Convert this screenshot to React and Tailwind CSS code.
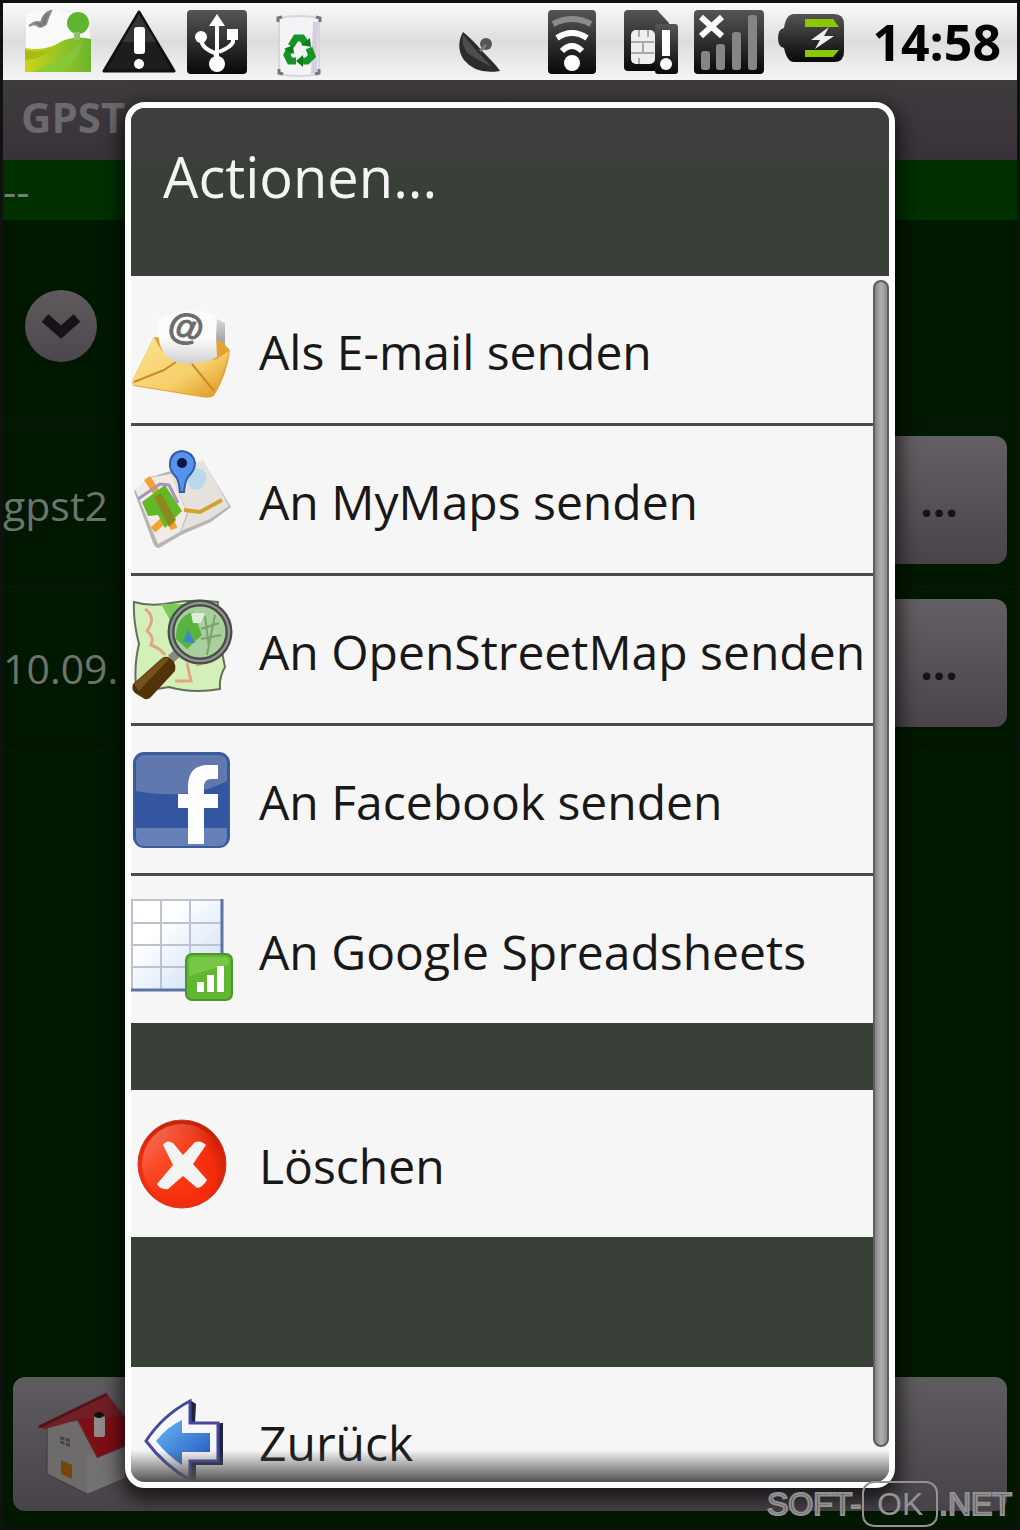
import React from "react";

function Landscape() {
  return (
    <svg viewBox="0 0 68 64" className="h-16 w-[68px]" aria-hidden="true">
      <defs>
        <linearGradient id="hill" x1="0" x2="1">
          <stop offset="0" stopColor="#c9d41f" />
          <stop offset="1" stopColor="#6bb52c" />
        </linearGradient>
      </defs>
      <path d="M2 4Q20 -2 44 3L58 2Q68 16 66 40L2 44Z" fill="#fafafa" />
      <path d="M1 38Q22 42 38 31Q52 25 67 29V62H1Z" fill="url(#hill)" />
      <path d="M1 40Q18 44 30 38Q16 50 1 50Z" fill="#a5bd12" />
      <path d="M8 62Q40 50 58 32Q54 52 34 62Z" fill="#83c93c" opacity=".8" />
      <ellipse cx="54" cy="13" rx="11" ry="11" fill="#5eb52f" />
      <path d="M53 22V30" stroke="#8cc470" strokeWidth="6" />
      <path d="M5 16Q12 10 17 13Q19 3 27 1Q24 7 22 14Q16 19 13 15Q9 13 5 16Z" fill="#777" stroke="#888" strokeWidth="2" />
    </svg>
  );
}

function Warning() {
  return (
    <svg viewBox="0 0 74 64" className="h-16 w-[74px]" aria-hidden="true">
      <path d="M37 2L72 61H2Z" fill="#1d1d1d" stroke="#111" strokeWidth="3" strokeLinejoin="round" />
      <path d="M37 4L54 32H20Z" fill="#444" opacity=".6" />
      <rect x="32" y="17" width="11" height="27" rx="3" fill="#fff" />
      <circle cx="37" cy="54" r="5" fill="#fff" />
    </svg>
  );
}

function DarkGradient({ id }) {
  return (
    <linearGradient id={id} x1="0" x2="0" y1="0" y2="1">
      <stop offset="0" stopColor="#555" />
      <stop offset="1" stopColor="#080808" />
    </linearGradient>
  );
}

function Usb() {
  return (
    <svg viewBox="0 0 62 66" className="h-[66px] w-[62px]" aria-hidden="true">
      <defs><DarkGradient id="usbg" /></defs>
      <rect x="1" y="1" width="60" height="64" rx="4" fill="url(#usbg)" />
      <g fill="none" stroke="#fff" strokeWidth="4">
        <path d="M31 56V12" />
        <path d="M16 28V34Q18 40 29 44L31 50" />
        <path d="M47 24V33Q45 38 33 43" />
      </g>
      <path d="M31 5L39 17H23Z" fill="#fff" />
      <circle cx="15" cy="28" r="6" fill="#fff" />
      <rect x="41" y="20" width="11" height="11" fill="#fff" />
      <circle cx="31" cy="55" r="8" fill="#fff" />
    </svg>
  );
}

function Recycle() {
  return (
    <svg viewBox="0 0 46 64" className="h-16 w-[46px]" aria-hidden="true">
      <path d="M3 4Q23 0 43 4V60Q23 64 3 60Z" fill="#f4f4f6" stroke="#d8d5de" strokeWidth="2" />
      <path d="M37 8L42 8L41 58L35 60Z" fill="#d4cfe0" />
      <g fill="none" stroke="#777" strokeWidth="3">
        <path d="M2 8V4L6 3M44 8V4L40 3M3 55V59L7 60M43 55V59L39 60" />
      </g>
      <g fill="none" stroke="#169426" strokeWidth="7">
        <path d="M15 32L20 24H26L30 30" />
        <path d="M33 34L36 42L31 47H26" />
        <path d="M20 47H14L11 41L14 35" />
      </g>
      <path d="M25 31L35 33L34 24ZM27 41V53L20 47ZM8 35L17 31L18 40Z" fill="#0c7e1c" />
    </svg>
  );
}

function Dish() {
  return (
    <svg viewBox="0 0 44 42" className="h-[42px] w-11" aria-hidden="true">
      <path d="M5 1Q-3 16 6 29Q18 44 42 40Q40 36 26 22Q14 8 5 1Z" fill="#2b2b2b" />
      <path d="M5 4Q3 18 12 24Q22 30 34 36Q18 20 5 4Z" fill="#666" opacity=".6" />
      <circle cx="28" cy="13" r="6" fill="#555" />
      <path d="M22 20L28 14" stroke="#777" strokeWidth="3" />
    </svg>
  );
}

function Wifi() {
  return (
    <svg viewBox="0 0 50 66" className="h-[66px] w-[50px]" aria-hidden="true">
      <defs><DarkGradient id="wifig" /></defs>
      <rect x="1" y="1" width="48" height="64" rx="4" fill="url(#wifig)" />
      <g fill="none" strokeWidth="6">
        <path d="M6 15Q25 5 44 15" stroke="#8a8a8a" />
        <path d="M10 29Q25 19 40 29" stroke="#fff" />
        <path d="M15 42Q25 32 35 42" stroke="#fff" />
      </g>
      <circle cx="25" cy="54" r="8" fill="#fff" />
    </svg>
  );
}

function Sim() {
  return (
    <svg viewBox="0 0 56 66" className="h-[66px] w-14" aria-hidden="true">
      <defs><DarkGradient id="simg" /></defs>
      <path d="M5 1H34L46 14V62H5Q1 62 1 58V5Q1 1 5 1Z" fill="url(#simg)" />
      <rect x="8" y="21" width="24" height="34" rx="5" fill="#eee" />
      <path d="M8 33H31M8 44H31M16 21V28M25 21V28M16 49V55M20 33V44" stroke="#aaa" strokeWidth="2" />
      <rect x="32" y="15" width="23" height="50" rx="3" fill="url(#simg)" />
      <rect x="39" y="21" width="8" height="26" fill="#fff" />
      <circle cx="43" cy="55" r="6" fill="#fff" />
    </svg>
  );
}

function Signal() {
  return (
    <svg viewBox="0 0 72 66" className="h-[66px] w-[72px]" aria-hidden="true">
      <defs><DarkGradient id="sigg" /></defs>
      <rect x="1" y="1" width="70" height="64" rx="4" fill="url(#sigg)" />
      <path d="M8 8L29 27M29 8L8 27" stroke="#fff" strokeWidth="6" />
      <g fill="#858585">
        <rect x="8" y="42" width="9" height="19" rx="3" />
        <rect x="23" y="35" width="9" height="26" rx="3" />
        <rect x="39" y="23" width="9" height="38" rx="3" />
        <rect x="55" y="6" width="9" height="55" rx="3" />
      </g>
    </svg>
  );
}

function Battery() {
  return (
    <svg viewBox="0 0 68 50" className="h-[50px] w-[68px]" aria-hidden="true">
      <defs><DarkGradient id="batg" /></defs>
      <path d="M7 15Q9 1 17 1H57Q67 1 67 11V39Q67 49 57 49H17Q10 49 7 35Q1 34 1 25Q1 16 7 15Z" fill="url(#batg)" />
      <path d="M28 6H56L62 14H28ZM28 37H62L56 44H28Z" fill="#8cc800" />
      <path d="M52 14L34 27H43L38 36L57 23H47Z" fill="#eee" />
    </svg>
  );
}

function Mail() {
  return (
    <svg viewBox="0 0 102 102" className="h-[102px] w-[102px]" aria-hidden="true">
      <defs>
        <linearGradient id="env" x1="0" x2="1" y1="0" y2="1">
          <stop offset="0" stopColor="#fbe391" />
          <stop offset=".6" stopColor="#f6cf69" />
          <stop offset="1" stopColor="#db9218" />
        </linearGradient>
        <linearGradient id="paper" x1="0" x2="0" y1="0" y2="1">
          <stop offset=".5" stopColor="#fcfcfc" />
          <stop offset="1" stopColor="#ccc" />
        </linearGradient>
        <linearGradient id="fold" x1="0" x2="0" y1="0" y2="1">
          <stop offset="0" stopColor="#d8d8d8" />
          <stop offset=".6" stopColor="#a5a5a5" />
          <stop offset="1" stopColor="#d8992f" />
        </linearGradient>
      </defs>
      <path d="M86 20L94 24V56H84Z" fill="url(#fold)" />
      <path d="M23 38L90 42L99 51Q96 76 83 97Q78 100 70 98L3 87Q0 85 2 80Z" fill="#e4a332" />
      <path d="M28 20Q54 6 84 16L86 58Q60 73 39 62Q24 48 28 20Z" fill="url(#paper)" />
      <path d="M23 38Q30 55 44 63L61 65L86 60L98 52Q93 76 82 96Q77 99 70 97L3 86Q1 84 2 80Z" fill="url(#env)" />
      <path d="M3 83L33 71L45 63M61 65L83 92" fill="none" stroke="#c98a27" strokeWidth="2" />
      <text x="55" y="40" textAnchor="middle" className="font-['Liberation_Sans'] text-[36px] font-bold" fill="#6c6c6c" stroke="#6c6c6c" transform="rotate(12 55 29)">@</text>
    </svg>
  );
}

function Maps() {
  return (
    <svg viewBox="0 0 102 102" className="h-[102px] w-[102px]" aria-hidden="true">
      <path d="M3 42L20 28L72 12L100 58L80 73L50 86L28 99Q24 99 22 94Z" fill="#b8b4b1" />
      <path d="M4 40L22 28L40 25L56 64L49 83L27 95Z" fill="#efebe7" />
      <path d="M40 25L72 11L98 57L79 70L50 82L57 65Z" fill="#e5e1dd" />
      <path d="M16 29L25 43M22 81L35 69M39 70L43 80" stroke="#f6a12b" strokeWidth="7" />
      <path d="M11 53L34 36L51 62L34 79L27 66L17 67Z" fill="#63b827" />
      <path d="M23 48L30 44L45 71L38 78Z" fill="#8c8a1f" />
      <path d="M7 50L29 35L38 36L47 54" fill="none" stroke="#a795bd" strokeWidth="3" />
      <ellipse cx="66" cy="30" rx="9" ry="11" fill="#b7d9eb" transform="rotate(20 66 30)" />
      <path d="M53 61L69 63L91 51" fill="none" stroke="#d2a333" strokeWidth="4" />
      <path d="M51 2Q62 3 64 14Q64 21 57 28Q54 32 53 43H49Q48 32 45 28Q38 21 39 14Q40 3 51 2Z" fill="#5593ef" stroke="#315ca5" strokeWidth="2" />
      <circle cx="51" cy="14" r="5" fill="#0b183b" />
    </svg>
  );
}

function StreetMap() {
  return (
    <svg viewBox="0 0 102 102" className="h-[102px] w-[102px]" aria-hidden="true">
      <path d="M3 3Q20 8 40 4Q60 0 87 3Q82 26 90 48L94 68Q88 78 89 90Q62 95 38 88Q20 92 5 88Q3 65 8 45Q2 22 3 3Z" fill="#d3f0b8" stroke="#64705a" strokeWidth="2" />
      <path d="M30 5H60L44 30Z" fill="#7bc95a" />
      <path d="M14 10Q26 18 16 32Q24 38 20 46Q30 50 34 56M56 64L60 82H44M65 66L72 64" fill="none" stroke="#e3a681" strokeWidth="3" />
      <path d="M40 60L52 49" stroke="#888" strokeWidth="9" />
      <path d="M2 85L30 60Q34 56 39 59Q46 64 44 72L20 98Q16 102 12 99L4 94Q0 90 2 85Z" fill="#513309" />
      <path d="M3 85L31 60Q35 57 38 60L8 92Z" fill="#77501a" />
      <circle cx="69" cy="33" r="28" fill="#a9cf9c" />
      <path d="M45 40Q44 18 62 13L71 36L56 50Z" fill="#58b43e" />
      <path d="M52 43L57 31L64 44Z" fill="#3c86cf" />
      <path d="M60 14H74L70 24H62Z" fill="#e2ecda" />
      <path d="M74 17L78 48M70 30L88 24M70 40L90 36M84 16L76 56" stroke="#78a46d" strokeWidth="2" />
      <circle cx="69" cy="33" r="29" fill="none" stroke="#4b504b" strokeWidth="7" />
      <circle cx="69" cy="33" r="29" fill="none" stroke="#979b97" strokeWidth="2" />
    </svg>
  );
}

function Facebook() {
  return (
    <svg viewBox="0 0 102 102" className="h-[102px] w-[102px]" aria-hidden="true">
      <rect x="3" y="4" width="95" height="94" rx="10" fill="#34559f" stroke="#3d5c9c" strokeWidth="2" />
      <path d="M5 42V14Q5 6 14 6H87Q96 6 96 14V32Q58 52 5 42Z" fill="#6078ae" />
      <path d="M5 79H96V88Q96 97 87 97H14Q5 97 5 88Z" fill="#6780b8" />
      <path d="M57 95V59H47V45H57V38Q57 16 77 16H87V30H80Q73 30 73 38V45H87V59H73V95Z" fill="#fff" />
    </svg>
  );
}

function Sheet() {
  return (
    <svg viewBox="0 0 102 102" className="h-[102px] w-[102px]" aria-hidden="true">
      <defs>
        <linearGradient id="sheet" x1="0" x2="1" y1="0" y2="1">
          <stop offset=".3" stopColor="#fff" />
          <stop offset="1" stopColor="#c8dcf5" />
        </linearGradient>
      </defs>
      <rect x="0" y="0" width="92" height="91" fill="url(#sheet)" />
      <path d="M1 90V1H91M1 24H91M1 46H91M1 68H91M30 1V90M59 1V90" fill="none" stroke="#bcc1d3" strokeWidth="2" />
      <path d="M0 91H91V0" fill="none" stroke="#5a74a3" strokeWidth="3" />
      <rect x="55" y="55" width="46" height="46" rx="6" fill="#5fb82f" stroke="#4b962c" strokeWidth="2" />
      <path d="M58 77V62Q58 58 62 58H94Q98 58 98 62V66Q78 70 58 77Z" fill="#78c645" />
      <path d="M66 83H73V93H66ZM76 76H83V93H76ZM86 67H93V93H86Z" fill="#fff" />
    </svg>
  );
}

function Delete() {
  return (
    <svg viewBox="0 0 102 102" className="h-[102px] w-[102px]" aria-hidden="true">
      <defs>
        <radialGradient id="red" cx=".45" cy=".6" r=".6">
          <stop offset="0" stopColor="#ff3b12" />
          <stop offset=".7" stopColor="#f22c0c" />
          <stop offset="1" stopColor="#c91d09" />
        </radialGradient>
        <linearGradient id="gloss" x1="0" x2="1" y1="0" y2="1">
          <stop offset="0" stopColor="#ffb09b" stopOpacity=".7" />
          <stop offset=".6" stopColor="#ff6a45" stopOpacity="0" />
        </linearGradient>
      </defs>
      <circle cx="51" cy="51" r="44" fill="url(#red)" stroke="#c63f2c" strokeWidth="1" />
      <circle cx="51" cy="51" r="40" fill="url(#gloss)" />
      <path d="M32 32Q36 26 42 30L52 42L64 29Q70 27 75 32L62 51L76 67Q72 74 66 75L52 63L37 76Q29 77 26 71L42 52Z" fill="#f3f3f3" />
    </svg>
  );
}

function Back() {
  return (
    <svg viewBox="0 0 102 102" className="h-[102px] w-[102px]" aria-hidden="true">
      <defs>
        <linearGradient id="arrow" x1="0" x2="1" y1="0" y2="1">
          <stop offset="0" stopColor="#6bb7f5" />
          <stop offset="1" stopColor="#1d55bd" />
        </linearGradient>
      </defs>
      <path d="M59 10L65 14L64 34L92 33V75H65V92L58 89Z" fill="#1c2440" />
      <path d="M59 11V33H87V71H59V90Q34 76 15 51Q32 25 59 11Z" fill="#f7f7fb" stroke="#49499c" strokeWidth="3" />
      <path d="M51 30V43H79V62H51V75Q36 65 25 51Q36 37 51 30Z" fill="url(#arrow)" />
    </svg>
  );
}

function House() {
  return (
    <svg viewBox="0 0 100 104" className="h-[104px] w-[100px]" aria-hidden="true">
      <path d="M10 32L44 28L62 68L88 52V86L50 102L10 82Z" fill="#6d6b6c" stroke="#3a3839" strokeWidth="1" />
      <path d="M50 64L88 48V86L50 102Z" fill="#737172" />
      <path d="M1 35L70 2L100 40V50L60 66L40 28L8 37Z" fill="#701f25" />
      <path d="M42 27L88 24L100 46L61 65Z" fill="#7f0d15" />
      <path d="M2 35L70 2" stroke="#521318" strokeWidth="3" />
      <rect x="57" y="24" width="11" height="21" rx="2" fill="#8e8b8b" />
      <ellipse cx="62" cy="23" rx="5" ry="3" fill="#121212" />
      <path d="M24 68L35 73V87L24 82Z" fill="#76450b" />
      <path d="M23 44L33 47V55L23 51Z" fill="#444" />
      <path d="M28 45V53M23 48L33 51" stroke="#777" />
    </svg>
  );
}

const shareActions = [
  { label: "Als E-mail senden", Icon: Mail },
  { label: "An MyMaps senden", Icon: Maps },
  { label: "An OpenStreetMap senden", Icon: StreetMap },
  { label: "An Facebook senden", Icon: Facebook },
  { label: "An Google Spreadsheets", Icon: Sheet },
];

function Action({ label, Icon }) {
  return (
    <button type="button" className="flex h-[147px] w-full shrink-0 items-center gap-[26px] bg-[#f6f6f6] text-left text-[48px] whitespace-nowrap text-[#181818]">
      <Icon />
      <span className="pt-1">{label}</span>
    </button>
  );
}

function StatusBar() {
  return (
    <header className="flex h-[77px] shrink-0 items-center bg-linear-to-b from-[#fafafa] via-[#dcdedc] to-[#f4f4f4] pr-4 pl-[21px]">
      <div className="flex items-center gap-[10px]">
        <Landscape />
        <Warning />
        <Usb />
      </div>
      <div className="ml-7 pt-2"><Recycle /></div>
      <div className="ml-auto flex items-center">
        <div className="mr-[45px] pt-5"><Dish /></div>
        <div className="mr-[26px]"><Wifi /></div>
        <div className="mr-[14px]"><Sim /></div>
        <div className="mr-3"><Signal /></div>
        <div className="pb-2"><Battery /></div>
        <time className="ml-[27px] text-[50px] leading-none font-bold text-black">14:58</time>
      </div>
    </header>
  );
}

function TrackRow({ name }) {
  return (
    <li className="flex h-[163px] items-center justify-between border-b-2 border-[#0a170a] pr-[10px] pb-3">
      <span className="pt-3 text-[41px] text-[#6c746c]">{name}</span>
      <button type="button" className="h-32 w-[136px] rounded-xl bg-linear-to-b from-[#636064] to-[#4a444a] text-[44px] font-bold text-[#151315]">...</button>
    </li>
  );
}

export default function App() {
  return (
    <div className="relative flex min-h-screen flex-col overflow-hidden border-[3px] border-[#101210] bg-[#001800] font-['Open_Sans','Noto_Sans',sans-serif]">
      <StatusBar />
      <h1 className="h-20 shrink-0 overflow-hidden bg-linear-to-b from-[#3e3b3f] to-[#383338] px-[18px] text-[42px] leading-[74px] font-bold text-[#6b696b]">GPSTracker - Profile</h1>
      <div className="h-[60px] shrink-0 bg-[#003000] text-[41px] leading-[60px] text-[#6c826c]">--</div>
      <main className="flex grow flex-col">
        <div className="flex h-[205px] items-center border-b-2 border-[#0a170a] pt-2 pl-[22px]">
          <button type="button" aria-label="Aufklappen" className="grid size-[72px] place-items-center rounded-full bg-linear-to-b from-[#5e5b5e] to-[#4c474c]">
            <svg viewBox="0 0 40 28" className="h-7 w-10" aria-hidden="true"><path d="M4 6L20 20L36 6" fill="none" stroke="#151315" strokeWidth="10" /></svg>
          </button>
        </div>
        <ul>
          <TrackRow name="gpst2" />
          <TrackRow name="10.09." />
        </ul>
      </main>
      <nav className="mx-[10px] mb-4 flex h-[134px] shrink-0 items-center rounded-xl bg-linear-to-b from-[#5f5c60] to-[#484348]">
        <button type="button" aria-label="Startseite" className="ml-6"><House /></button>
      </nav>

      <div className="absolute inset-0 flex px-[122px] pt-[99px] pb-[39px]">
        <section role="dialog" aria-labelledby="dialog-title" className="relative flex min-w-0 grow flex-col overflow-hidden rounded-[20px] border-[6px] border-white bg-[#384038] shadow-[0_8px_20px_4px_#000000b0]">
          <h2 id="dialog-title" className="h-[168px] shrink-0 bg-linear-to-b from-[#403f40] from-[52px] to-[#384038] to-[56px] pl-8 text-[56px] leading-[136px] text-[#f4f4f4]">Actionen...</h2>
          <div className="flex h-0 grow flex-col overflow-hidden">
            <div className="flex shrink-0 flex-col gap-[3px] bg-[#4a4b4a]">
              {shareActions.map((a) => <Action key={a.label} {...a} />)}
            </div>
            <div className="mt-[67px]"><Action label="Löschen" Icon={Delete} /></div>
            <div className="mt-[130px]"><Action label="Zurück" Icon={Back} /></div>
          </div>
          <div className="pointer-events-none absolute inset-x-0 bottom-0 h-8 bg-linear-to-b from-transparent to-[#505050]" />
          <div className="absolute top-[172px] right-0 bottom-[35px] w-4 rounded-full border-2 border-[#5e5e5e] bg-linear-to-r from-[#858585] via-[#b0b0b0] to-[#8d8d8d]" />
        </section>
      </div>

      <div className="absolute right-[5px] bottom-0 flex items-center font-['Liberation_Sans',sans-serif] text-[32px] leading-none text-[#555] [-webkit-text-stroke:2px_#929292]">
        <span>SOFT-</span>
        <span className="mx-px flex h-[46px] w-[76px] items-center justify-center rounded-xl border-2 border-[#929292] text-[#929292] [-webkit-text-stroke:0px]">OK</span>
        <span>.NET</span>
      </div>
    </div>
  );
}
